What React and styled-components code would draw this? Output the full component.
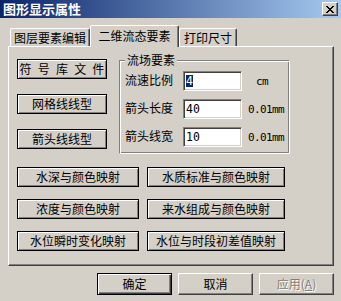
import React from "react";
import styled, { createGlobalStyle } from "styled-components";

const GlobalStyle = createGlobalStyle`
  html, body {
    margin: 0;
    padding: 0;
    background: #d4d0c8;
  }
  * {
    box-sizing: border-box;
  }
`;

const cjk = `"Noto Sans CJK SC", "Liberation Sans", sans-serif`;
const mono = `"DejaVu Sans Mono", "Liberation Mono", monospace`;

const Window = styled.div`
  width: 341px;
  height: 301px;
  background: #d4d0c8;
  font-family: ${cjk};
  font-size: 12px;
  color: #000;
  overflow: hidden;
  display: flex;
  flex-direction: column;
`;

const TitleBar = styled.div`
  height: 18px;
  flex: none;
  display: flex;
  align-items: center;
  justify-content: space-between;
  padding: 0 3px 0 3px;
  background: linear-gradient(to right, #0a246a, #a6caf0);
`;

const Title = styled.span`
  color: #fff;
  font-weight: bold;
  font-size: 13px;
  line-height: 18px;
`;

const CloseButton = styled.div`
  width: 16px;
  height: 14px;
  background: #d4d0c8;
  border: 1px solid;
  border-color: #fff #404040 #404040 #fff;
  box-shadow: inset -1px -1px #808080;
  display: flex;
  align-items: center;
  justify-content: center;
`;

const Body = styled.div`
  flex: 1;
  display: flex;
  flex-direction: column;
  padding: 7px 0 0 8px;
`;

const TabStrip = styled.div`
  height: 21px;
  display: flex;
  align-items: flex-end;
  padding-left: 2px;
`;

const Tab = styled.div`
  position: relative;
  width: ${(p) => p.$width}px;
  height: ${(p) => (p.$active ? 22 : 18)}px;
  margin-bottom: ${(p) => (p.$active ? -1 : 0)}px;
  z-index: ${(p) => (p.$active ? 1 : 0)};
  background: #d4d0c8;
  border-top: 1px solid #fff;
  border-left: 1px solid #fff;
  border-right: 1px solid #404040;
  border-radius: 2px 2px 0 0;
  box-shadow: inset -1px 0 #808080;
  display: flex;
  align-items: ${(p) => (p.$active ? "flex-start" : "center")};
  padding-top: ${(p) => (p.$active ? 2 : 0)}px;
  justify-content: center;
  line-height: 16px;
  white-space: nowrap;
`;

const Panel = styled.div`
  width: 326px;
  height: 220px;
  border-top: 1px solid #fff;
  border-left: 1px solid #fff;
  border-right: 1px solid #404040;
  border-bottom: 1px solid #404040;
  box-shadow: inset -1px -1px #808080;
  padding: 12px 0 0 8px;
`;

const TopSection = styled.div`
  display: flex;
  align-items: flex-start;
  gap: 12px;
`;

const ButtonColumn = styled.div`
  width: 90px;
  display: flex;
  flex-direction: column;
  gap: 15px;
`;

const FrameButton = styled.div`
  height: 20px;
  background: #d4d0c8;
  border: 1px solid #000;
  box-shadow: inset 1px 1px #fff, inset -1px -1px #808080;
  display: flex;
  align-items: center;
  justify-content: center;
  line-height: 14px;
  white-space: pre;
  word-spacing: ${(p) => p.$spread || 0}px;
`;

const GroupBox = styled.div`
  width: 171px;
  height: 94px;
  margin-top: 1px;
  border-top: 1px solid #808080;
  border-left: 1px solid #808080;
  border-right: 1px solid #fff;
  border-bottom: 1px solid #fff;
  box-shadow: inset 1px 1px #fff, inset -1px -1px #808080;
  padding-left: 5px;
`;

const Legend = styled.div`
  width: fit-content;
  margin-top: -8px;
  padding: 0 2px;
  background: #d4d0c8;
  line-height: 14px;
`;

const FieldList = styled.div`
  display: flex;
  flex-direction: column;
  gap: 8px;
  margin-top: 4px;
`;

const FieldRow = styled.div`
  display: flex;
  align-items: center;
  height: 20px;
`;

const FieldLabel = styled.span`
  width: 58px;
  line-height: 14px;
  margin-top: -3px;
`;

const TextBox = styled.div`
  width: 59px;
  height: 20px;
  background: #fff;
  border: 1px solid;
  border-color: #808080 #fff #fff #808080;
  box-shadow: inset 1px 1px #404040, inset -1px -1px #d4d0c8;
  padding: 0 2px;
  display: flex;
  align-items: center;
  font-family: ${mono};
  font-size: 11.5px;
`;

const Selection = styled.span`
  background: #0a246a;
  color: #fff;
  line-height: 12px;
`;

const Unit = styled.span`
  margin-left: ${(p) => p.$offset}px;
  font-family: ${mono};
  font-size: 11px;
  letter-spacing: -0.6px;
`;

const MappingGrid = styled.div`
  display: grid;
  grid-template-columns: 122px 138px;
  grid-auto-rows: 20px;
  column-gap: 8px;
  row-gap: 12px;
  margin-top: 13px;
`;

const Footer = styled.div`
  display: flex;
  justify-content: flex-end;
  gap: 6px;
  margin-top: 7px;
  padding-right: 7px;
`;

const DialogButton = styled.div`
  width: 75px;
  height: 22px;
  background: #d4d0c8;
  border: 1px solid;
  border-color: ${(p) => (p.$default ? "#000" : "#fff #404040 #404040 #fff")};
  box-shadow: ${(p) =>
    p.$default
      ? "inset 1px 1px #fff, inset -1px -1px #404040, inset -2px -2px #808080"
      : "inset -1px -1px #808080"};
  display: flex;
  align-items: center;
  justify-content: center;
  color: ${(p) => (p.$disabled ? "#808080" : "#000")};
  text-shadow: ${(p) => (p.$disabled ? "1px 1px #fff" : "none")};
  line-height: 14px;
`;

const CloseIcon = () => (
  <svg width="8" height="7" viewBox="0 0 8 7" shapeRendering="crispEdges">
    <polygon points="0,0 2,0 8,7 6,7" fill="#000" />
    <polygon points="6,0 8,0 2,7 0,7" fill="#000" />
  </svg>
);

const fields = [
  { label: "流速比例", value: "4", selected: true, unit: "cm", offset: 14 },
  { label: "箭头长度", value: "40", unit: "0.01mm", offset: 6 },
  { label: "箭头线宽", value: "10", unit: "0.01mm", offset: 6 },
];

const mappings = [
  "水深与颜色映射",
  "水质标准与颜色映射",
  "浓度与颜色映射",
  "来水组成与颜色映射",
  "水位瞬时变化映射",
  "水位与时段初差值映射",
];

export default function App() {
  return (
    <>
      <GlobalStyle />
      <Window>
        <TitleBar>
          <Title>图形显示属性</Title>
          <CloseButton>
            <CloseIcon />
          </CloseButton>
        </TitleBar>
        <Body>
          <TabStrip>
            <Tab $width={80}>图层要素编辑</Tab>
            <Tab $width={89} $active>
              二维流态要素
            </Tab>
            <Tab $width={58}>打印尺寸</Tab>
          </TabStrip>
          <Panel>
            <TopSection>
              <ButtonColumn>
                <FrameButton $spread={3.5}>符 号 库 文 件</FrameButton>
                <FrameButton>网格线线型</FrameButton>
                <FrameButton>箭头线线型</FrameButton>
              </ButtonColumn>
              <GroupBox>
                <Legend>流场要素</Legend>
                <FieldList>
                  {fields.map((f) => (
                    <FieldRow key={f.label}>
                      <FieldLabel>{f.label}</FieldLabel>
                      <TextBox>
                        {f.selected ? <Selection>{f.value}</Selection> : f.value}
                      </TextBox>
                      <Unit $offset={f.offset}>{f.unit}</Unit>
                    </FieldRow>
                  ))}
                </FieldList>
              </GroupBox>
            </TopSection>
            <MappingGrid>
              {mappings.map((m) => (
                <FrameButton key={m}>{m}</FrameButton>
              ))}
            </MappingGrid>
          </Panel>
          <Footer>
            <DialogButton $default>确定</DialogButton>
            <DialogButton>取消</DialogButton>
            <DialogButton $disabled>
              <span>
                应用(<u>A</u>)
              </span>
            </DialogButton>
          </Footer>
        </Body>
      </Window>
    </>
  );
}
